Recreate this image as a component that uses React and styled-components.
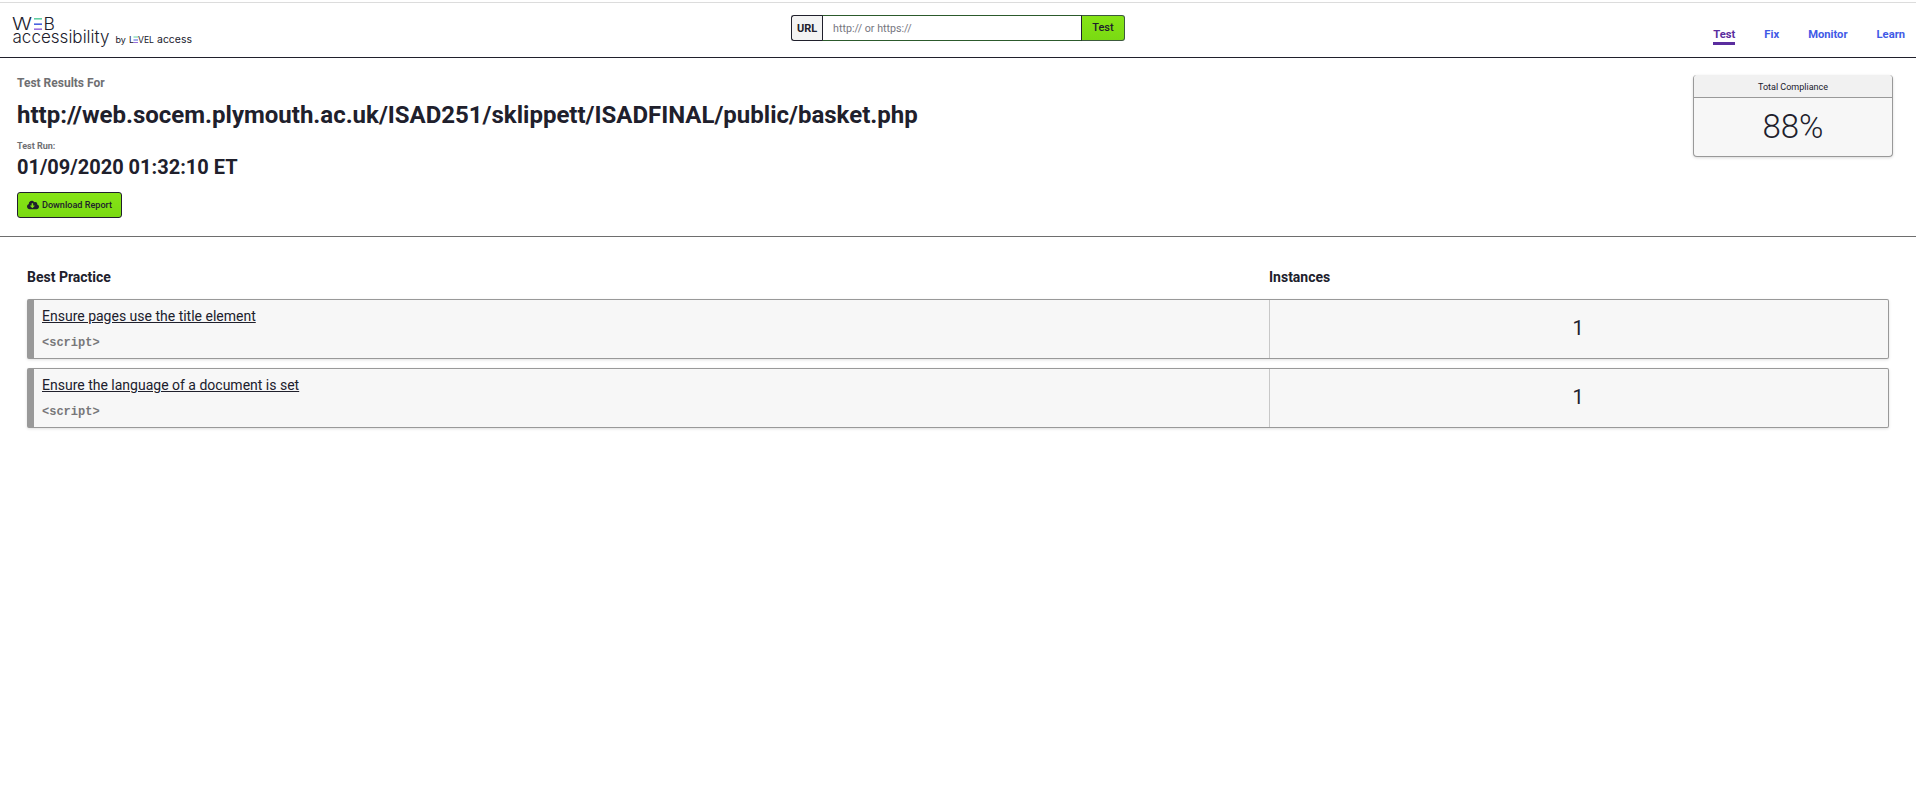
import React from 'react'
import styled, { createGlobalStyle } from 'styled-components'
import { FaCloudDownloadAlt } from 'react-icons/fa'

const Global = createGlobalStyle`
  html, body { margin: 0; padding: 0; background: #fff; }
  body { font-family: Roboto, "Liberation Sans", sans-serif; color: #20202c; }
  * { box-sizing: border-box; }
`

const Page = styled.div`
  min-height: 793px;
  padding-top: 2px;
  background: #fff;
`

const Header = styled.header`
  display: grid;
  grid-template-columns: 1fr auto 1fr;
  height: 56px;
  border-top: 1px solid #dcdcdc;
  border-bottom: 1px solid #20202c;
`

const Logo = styled.a`
  display: block;
  padding: 6px 0 0 12px;
`

const LogoArt = styled.svg`
  display: block;
  font-family: Inter, sans-serif;
  font-weight: 300;
  fill: #20202c;
`

const LogoSmall = styled.text`
  font-weight: 400;
`

const SearchForm = styled.form`
  display: flex;
  width: 334px;
  height: 26px;
  margin-top: 12px;
`

const UrlLabel = styled.label`
  display: flex;
  align-items: center;
  justify-content: center;
  width: 31px;
  background: #f3f3f3;
  border: 1px solid #20202c;
  border-right: 0;
  border-radius: 3px 0 0 3px;
  font-size: 11px;
  font-weight: 700;
`

const UrlInput = styled.input`
  flex: 1;
  min-width: 0;
  padding: 0 10px;
  border: 1px solid #2c5a2c;
  border-left-color: #20202c;
  border-right-color: #20202c;
  outline: 0;
  font-family: Roboto, sans-serif;
  font-size: 10.7px;
  &::placeholder { color: #77777f; opacity: 1; }
`

const TestButton = styled.button`
  width: 43px;
  padding: 0 0 2px;
  background: linear-gradient(#86e416, #7ada12);
  border: 1px solid #3c5a3c;
  border-left: 0;
  border-radius: 0 3px 3px 0;
  color: #20202c;
  font-family: Roboto, sans-serif;
  font-size: 11px;
  font-weight: 500;
`

const Nav = styled.nav`
  display: flex;
  justify-content: flex-end;
  gap: 29px;
  padding: 25px 11px 0 0;
`

const NavLink = styled.a`
  height: 17px;
  font-size: 11.2px;
  font-weight: 700;
  line-height: 14px;
  color: ${p => (p.$active ? '#5a2d9e' : '#3f5ae6')};
  border-bottom: ${p => (p.$active ? '3px solid #5a2d9e' : '0')};
`

const Summary = styled.section`
  display: flex;
  justify-content: space-between;
  height: 179px;
  padding: 17px 23px 0 17px;
  border-bottom: 1px solid #6e6e6e;
`

const SummaryInfo = styled.div`
  display: flex;
  flex-direction: column;
  align-items: flex-start;
`

const ResultsFor = styled.div`
  font-size: 12px;
  font-weight: 700;
  line-height: 16px;
  color: #6f6f72;
`

const TestedUrl = styled.h1`
  margin: 8px 0 0;
  font-size: 24px;
  font-weight: 700;
  line-height: 32px;
`

const RunLabel = styled.div`
  margin-top: 9px;
  font-size: 9px;
  font-weight: 700;
  line-height: 12px;
  color: #6f6f72;
`

const RunDate = styled.div`
  margin-top: 2px;
  font-size: 20px;
  font-weight: 700;
  line-height: 26px;
`

const DownloadButton = styled.button`
  display: flex;
  align-items: center;
  gap: 3px;
  height: 26px;
  margin-top: 12px;
  padding: 0 9px;
  background: linear-gradient(#86e416, #7ada12);
  border: 1px solid #20202c;
  border-radius: 3px;
  color: #20202c;
  font-family: Roboto, sans-serif;
  font-size: 9.1px;
  font-weight: 500;
`

const ScoreCard = styled.aside`
  width: 200px;
  height: 82px;
  background: #f7f7f7;
  border: 1px solid #999;
  border-top: 0;
  border-radius: 4px;
  box-shadow: 0 1px 3px rgba(0, 0, 0, 0.15);
  text-align: center;
`

const ScoreTitle = styled.div`
  height: 23px;
  background: #f1f1f1;
  border-bottom: 1px solid #999;
  border-radius: 4px 4px 0 0;
  font-size: 9px;
  line-height: 24px;
`

const ScoreValue = styled.div`
  font-size: 33px;
  font-weight: 300;
  line-height: 57px;
`

const Results = styled.section`
  padding: 0 27px;
`

const ResultsHead = styled.div`
  display: grid;
  grid-template-columns: 1242px 1fr;
  padding-top: 31px;
  height: 62px;
  font-size: 14px;
  font-weight: 700;
  line-height: 18px;
`

const Row = styled.article`
  display: grid;
  grid-template-columns: 1235px 1fr;
  height: 60px;
  margin-bottom: 9px;
  background: #f7f7f7;
  border: 1px solid #999;
  border-left: 7px solid #999;
  border-radius: 2px;
  box-shadow: 0 1px 3px rgba(0, 0, 0, 0.12);
`

const RowMain = styled.div`
  padding: 7px 0 0 8px;
`

const RowTitle = styled.a`
  display: block;
  font-size: 14px;
  line-height: 18px;
  color: #20202c;
  text-decoration: underline;
`

const RowCode = styled.code`
  display: block;
  margin-top: 10px;
  font-family: "Liberation Mono", monospace;
  font-size: 12px;
  font-weight: 700;
  line-height: 16px;
  color: #77777a;
`

const RowCount = styled.div`
  display: flex;
  align-items: center;
  justify-content: center;
  padding: 0 2px 2px 0;
  border-left: 1px solid #c8c8c8;
  font-size: 20px;
`

const rules = ['Ensure pages use the title element', 'Ensure the language of a document is set']

function LevelLogo() {
  return (
    <LogoArt width="186" height="44" viewBox="0 -6 186 44" aria-label="Web accessibility by Level Access">
      <text x="0" y="15" fontSize="17.5" textLength="20" lengthAdjust="spacingAndGlyphs">W</text>
      <rect x="22" y="3" width="8" height="1.6" fill="#62d0a4" />
      <rect x="22" y="8.4" width="8" height="1.6" fill="#4a63e0" />
      <rect x="22" y="13.4" width="8" height="1.6" fill="#9a6fdc" />
      <text x="31.5" y="15" fontSize="17.5">B</text>
      <text x="0.5" y="28" fontSize="17.5" textLength="97" lengthAdjust="spacingAndGlyphs">accessibility</text>
      <LogoSmall x="103.5" y="28" fontSize="9">by</LogoSmall>
      <LogoSmall x="117" y="28" fontSize="9">L</LogoSmall>
      <rect x="121.5" y="21.5" width="4.5" height="1" fill="#62d0a4" />
      <rect x="121.5" y="24.5" width="4.5" height="1" fill="#4a63e0" />
      <rect x="121.5" y="27" width="4.5" height="1" fill="#9a6fdc" />
      <LogoSmall x="126" y="28" fontSize="9" textLength="16" lengthAdjust="spacingAndGlyphs">VEL</LogoSmall>
      <LogoSmall x="145" y="28" fontSize="10" textLength="35" lengthAdjust="spacingAndGlyphs">access</LogoSmall>
    </LogoArt>
  )
}

export default function App() {
  return (
    <Page>
      <Global />
      <Header>
        <Logo>
          <LevelLogo />
        </Logo>
        <SearchForm>
          <UrlLabel>URL</UrlLabel>
          <UrlInput placeholder="http:// or https://" />
          <TestButton type="button">Test</TestButton>
        </SearchForm>
        <Nav>
          <NavLink $active>Test</NavLink>
          <NavLink>Fix</NavLink>
          <NavLink>Monitor</NavLink>
          <NavLink>Learn</NavLink>
        </Nav>
      </Header>
      <Summary>
        <SummaryInfo>
          <ResultsFor>Test Results For</ResultsFor>
          <TestedUrl>http://web.socem.plymouth.ac.uk/ISAD251/sklippett/ISADFINAL/public/basket.php</TestedUrl>
          <RunLabel>Test Run:</RunLabel>
          <RunDate>01/09/2020 01:32:10 ET</RunDate>
          <DownloadButton type="button">
            <FaCloudDownloadAlt size={12} />
            Download Report
          </DownloadButton>
        </SummaryInfo>
        <ScoreCard>
          <ScoreTitle>Total Compliance</ScoreTitle>
          <ScoreValue>88%</ScoreValue>
        </ScoreCard>
      </Summary>
      <Results>
        <ResultsHead>
          <div>Best Practice</div>
          <div>Instances</div>
        </ResultsHead>
        {rules.map(rule => (
          <Row key={rule}>
            <RowMain>
              <RowTitle>{rule}</RowTitle>
              <RowCode>{'<script>'}</RowCode>
            </RowMain>
            <RowCount>1</RowCount>
          </Row>
        ))}
      </Results>
    </Page>
  )
}
